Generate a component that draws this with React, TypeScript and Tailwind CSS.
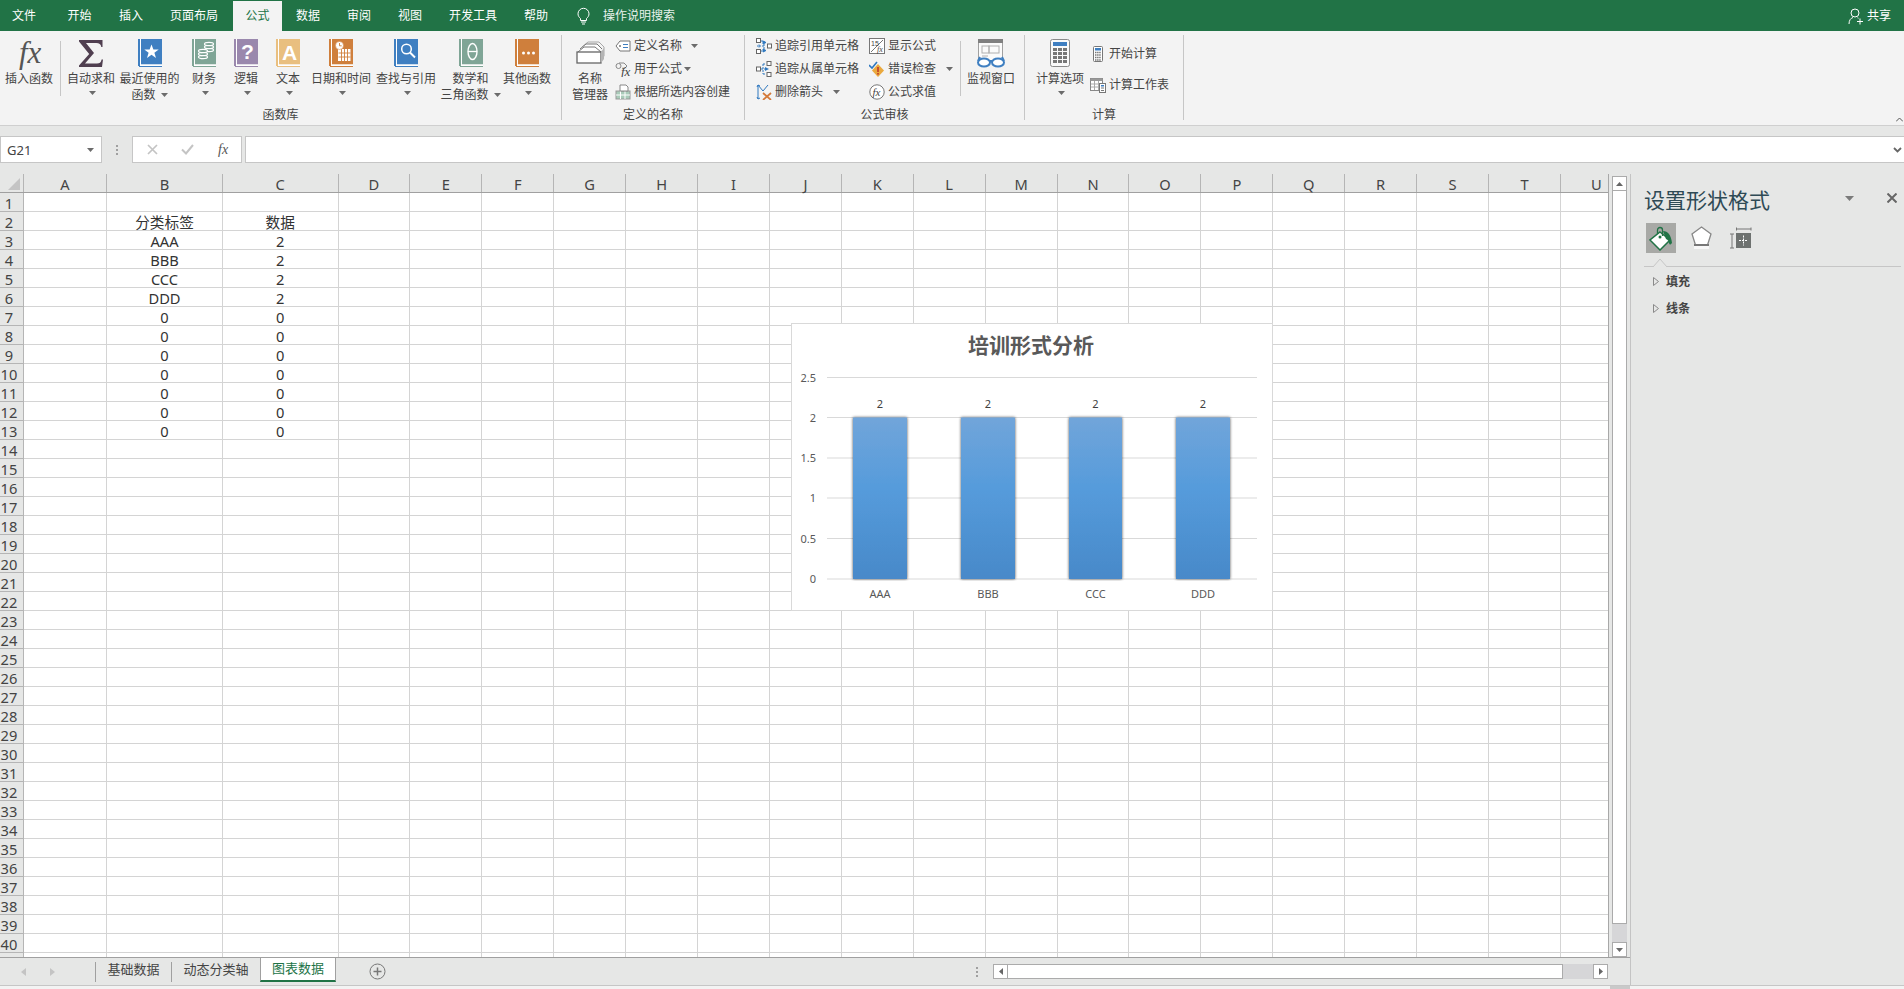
import React from "react";

const FONT = "font-['Noto_Sans','Noto_Sans_CJK_SC',sans-serif]";

const Caret = () => (
  <svg width="7" height="4" viewBox="0 0 7 4" className="shrink-0">
    <path d="M0 0h7L3.5 4z" fill="#6b6b6b" />
  </svg>
);

const Book = ({ color, children }: { color: string; children?: React.ReactNode }) => (
  <svg width="24" height="28" viewBox="0 0 24 28">
    <rect x="0" y="0" width="2" height="27" fill={color} />
    <rect x="3" y="0" width="21" height="25.5" fill={color} />
    <rect x="1" y="27" width="23" height="1" fill={color} />
    <rect x="2" y="0" width="1" height="27" fill="#ffffff" />
    <rect x="2" y="25.5" width="22" height="1.5" fill="#ffffff" />
    {children}
  </svg>
);

const FxIcon = () => (
  <svg width="36" height="34" viewBox="0 0 36 34">
    <text x="8" y="27" fontSize="31" fontStyle="italic" fill="#555555" className="font-['Liberation_Serif',serif]">fx</text>
  </svg>
);

const SigmaIcon = () => (
  <svg width="24" height="27" viewBox="0 0 24 27">
    <path d="M0 0h23.5v7h-1.2c-.5-3-2-4-5-4H7l8 10L6 23.4h12c2.500 0 4-1 4.600-4h1.400L23 27H0v-1.500L10.200 14 0 1.500z" fill="#503f50" />
  </svg>
);

const StarBook = () => (
  <Book color="#3f7fc1">
    <path d="M13.500 5.500l1.900 5h5.300l-4.300 3.200 1.600 5.300-4.500-3.200-4.500 3.200 1.600-5.300-4.300-3.200h5.300z" fill="#fff" />
  </Book>
);

const CoinBook = () => (
  <Book color="#7fa596">
    <g fill="#7fa596" stroke="#fff" strokeWidth="1.200">
      <ellipse cx="17" cy="11" rx="4.500" ry="1.600" />
      <ellipse cx="17" cy="8" rx="4.500" ry="1.600" />
      <ellipse cx="17" cy="5" rx="4.500" ry="1.600" />
      <ellipse cx="11" cy="18" rx="4.500" ry="1.600" />
      <ellipse cx="11" cy="15" rx="4.500" ry="1.600" />
      <ellipse cx="11" cy="12" rx="4.500" ry="1.600" />
    </g>
  </Book>
);

const QBook = () => (
  <Book color="#9a88ad">
    <text x="13.500" y="20" textAnchor="middle" fontSize="21" fontWeight="700" fill="#fff" className="font-['Liberation_Sans',sans-serif]">?</text>
  </Book>
);

const TextBook = () => (
  <Book color="#e9bf7f">
    <text x="13.500" y="21" textAnchor="middle" fontSize="21" fontWeight="700" fill="#fff" className="font-['Liberation_Sans',sans-serif]">A</text>
  </Book>
);

const DateBook = () => (
  <Book color="#cf7f3c">
    <path d="M9 10h12.500v12H9z" fill="#fff" />
    <path d="M9.500 14h12M9.500 18h12M12.500 10v12M15.500 10v12M18.500 10v12" stroke="#cf7f3c" strokeWidth="0.900" />
    <circle cx="10.500" cy="6.500" r="4" fill="#fff" stroke="#cf7f3c" strokeWidth="0.500" />
    <path d="M10.500 4v2.800h2.200" stroke="#cf7f3c" strokeWidth="0.900" fill="none" />
  </Book>
);

const SearchBook = () => (
  <Book color="#3f7fc1">
    <circle cx="12.500" cy="10" r="4.800" fill="none" stroke="#fff" strokeWidth="1.500" />
    <path d="M16 13.500l5 5" stroke="#fff" strokeWidth="1.900" />
  </Book>
);

const ThetaBook = () => (
  <Book color="#7fa596">
    <ellipse cx="13.500" cy="12.500" rx="4.500" ry="8" fill="none" stroke="#fff" strokeWidth="1.400" />
    <path d="M9 12.500h9" stroke="#fff" strokeWidth="1.300" />
  </Book>
);

const DotsBook = () => (
  <Book color="#cf7f3c">
    <circle cx="8.500" cy="14" r="1.500" fill="#fff" />
    <circle cx="13.500" cy="14" r="1.500" fill="#fff" />
    <circle cx="18.500" cy="14" r="1.500" fill="#fff" />
  </Book>
);

const NameMgrIcon = () => (
  <svg width="29" height="24" viewBox="0 0 29 24">
    <path d="M6 6l6-5h11l5 5v9l-3 4" fill="none" stroke="#a8a8a8" strokeWidth="1" />
    <path d="M4 8l6-5h11l5 5" fill="#fff" stroke="#777" strokeWidth="1" />
    <path d="M2 11l6-5h11l6 5" fill="#fff" stroke="#777" strokeWidth="1" />
    <rect x="1" y="11" width="24" height="11" fill="#fff" stroke="#666" strokeWidth="1.300" />
    <path d="M25 11l3-4v11l-3 4z" fill="#b5b5b5" />
  </svg>
);

const WatchIcon = () => (
  <svg width="30" height="29" viewBox="0 0 30 29">
    <rect x="2.500" y="0.500" width="24" height="22" fill="#fbfbfb" stroke="#a0a0a0" />
    <rect x="2" y="0" width="25" height="4" fill="#808080" />
    <rect x="6" y="7" width="7" height="7" fill="none" stroke="#b0b0b0" />
    <rect x="13" y="7" width="10" height="7" fill="none" stroke="#b0b0b0" />
    <path d="M6 17h6" stroke="#b0b0b0" />
    <g fill="#fff" stroke="#3f7fc1" strokeWidth="2">
      <ellipse cx="8" cy="23.500" rx="6" ry="4" />
      <ellipse cx="22" cy="23.500" rx="6" ry="4" />
    </g>
    <path d="M13 22h4M2 22l2-4M28 22l-2-4" fill="none" stroke="#3f7fc1" strokeWidth="2" />
  </svg>
);

const CalcBig = () => (
  <svg width="20" height="28" viewBox="0 0 20 28">
    <rect x="0.500" y="0.500" width="19" height="27" rx="2" fill="#fafafa" stroke="#8a8a8a" />
    <rect x="3" y="3" width="14" height="4" fill="#3f7fc1" />
    {[9, 13, 17, 21].map((y) =>
      [3, 8, 13].map((x) => <rect key={`${x}-${y}`} x={x} y={y} width="4" height="3" fill="#777" />)
    )}
  </svg>
);

const I16 = ({ children }: { children: React.ReactNode }) => (
  <svg width="16" height="16" viewBox="0 0 16 16" className="shrink-0">
    {children}
  </svg>
);

const DefineIcon = () => (
  <I16>
    <path d="M5 3h10v10H5L1 8z" fill="#fff" stroke="#777" />
    <circle cx="5" cy="8" r="1" fill="#777" />
    <path d="M8 6.500h5M8 9.500h5" stroke="#3f7fc1" />
  </I16>
);
const UseIcon = () => (
  <I16>
    <path d="M4 2h5l3 3-3 3-2-1" fill="none" stroke="#888" />
    <circle cx="3.500" cy="5" r="2.500" fill="none" stroke="#888" />
    <text x="6" y="15" fontSize="13" fontStyle="italic" fill="#444" className="font-['Liberation_Serif',serif]">fx</text>
  </I16>
);
const CreateIcon = () => (
  <I16>
    <rect x="1" y="7" width="14" height="8" fill="#a9cbb9" stroke="#999" />
    <path d="M5.500 7v8M10 7v8M1 11h14" stroke="#fff" />
    <path d="M5 1h6l2 2v4H5z" fill="#fff" stroke="#888" />
  </I16>
);
const TraceP = () => (
  <I16>
    <rect x="0.500" y="0.500" width="4" height="4" fill="#fff" stroke="#666" />
    <rect x="0.500" y="11.500" width="4" height="4" fill="#fff" stroke="#666" />
    <rect x="11.500" y="6" width="4" height="4" fill="#fff" stroke="#666" />
    <path d="M5 3h3v10H5M8 8H1" stroke="#2f78bf" fill="none" strokeDasharray="2 1" />
    <path d="M3 6.500v3M7 3l3 1.500L7 6zM7 11l3 1.500L7 14z" fill="#2f78bf" stroke="#2f78bf" />
  </I16>
);
const TraceD = () => (
  <I16>
    <rect x="0.500" y="6" width="4" height="4" fill="#fff" stroke="#666" />
    <rect x="11" y="0.500" width="4" height="4" fill="#fff" stroke="#666" />
    <rect x="11" y="11.500" width="4" height="4" fill="#fff" stroke="#666" />
    <path d="M5 8h4M7 3h3M7 13h3M7 3v10" stroke="#2f78bf" strokeDasharray="2 1" fill="none" />
    <path d="M9 6l4 2-4 2z" fill="#2f78bf" />
  </I16>
);
const RemoveArrows = () => (
  <I16>
    <path d="M2 1l5 6M2 15V1M12 1L7 7" stroke="#2f78bf" fill="none" />
    <path d="M1 3l1-2 2 1M1 13l1 2 2-1" stroke="#2f78bf" fill="none" />
    <path d="M7 9l8 7M15 9l-8 7" stroke="#d47a3a" strokeWidth="1.700" />
  </I16>
);
const ShowF = () => (
  <I16>
    <rect x="0.500" y="0.500" width="15" height="15" fill="#fff" stroke="#777" />
    <path d="M2 14L14 2" stroke="#777" />
    <text x="2" y="8" fontSize="7" fill="#444" className="font-['Liberation_Sans',sans-serif]">15</text>
    <text x="8" y="14" fontSize="8" fontStyle="italic" fill="#444" className="font-['Liberation_Serif',serif]">fx</text>
  </I16>
);
const ErrorIcon = () => (
  <I16>
    <path d="M0 4l3 3 5-6" stroke="#2f78bf" strokeWidth="1.600" fill="none" />
    <path d="M9 3l6 6.500-6 6.500-6-6.500z" fill="#eaa93e" />
    <rect x="8.200" y="6" width="1.600" height="5" fill="#c0392b" />
    <rect x="8.200" y="12" width="1.600" height="1.600" fill="#c0392b" />
  </I16>
);
const EvalIcon = () => (
  <I16>
    <circle cx="8" cy="8" r="7.200" fill="#fff" stroke="#777" />
    <text x="3.500" y="12" fontSize="11" fontStyle="italic" fill="#444" className="font-['Liberation_Serif',serif]">fx</text>
  </I16>
);
const CalcSmall = () => (
  <I16>
    <rect x="3.500" y="0.500" width="9" height="15" rx="1" fill="#fff" stroke="#777" />
    <rect x="5" y="2" width="6" height="2.500" fill="#3f7fc1" />
    <path d="M5 6.500h6M5 9h6M5 11.500h6M5 14h6" stroke="#777" strokeWidth="1.300" strokeDasharray="1.500 .6" />
  </I16>
);
const CalcSheet = () => (
  <I16>
    <rect x="0.500" y="1.500" width="12" height="12" fill="#fff" stroke="#888" />
    <rect x="0.500" y="1.500" width="12" height="2.500" fill="#999" />
    <path d="M4.500 4v9M8.500 4v9M1 7h11M1 10h11" stroke="#aaa" />
    <rect x="9.500" y="6.500" width="6" height="9" fill="#fff" stroke="#777" />
    <rect x="11" y="8" width="3" height="1.500" fill="#3f7fc1" />
    <path d="M11 11h3M11 13.500h3" stroke="#777" />
  </I16>
);

const BigBtn = ({ w, lines, icon, caret = true, inlineCaret = false, pl = 0 }: { w: number; lines: string[]; icon: React.ReactNode; caret?: boolean; inlineCaret?: boolean; pl?: number }) => (
  <div className="flex shrink-0 flex-col items-center" style={{ width: w, paddingLeft: pl }}>
    <div className="mt-[4px] flex h-[28px] items-center justify-center">{icon}</div>
    <div className="mt-[4px] flex flex-col items-center whitespace-nowrap leading-[16px]">
      {lines.map((l, i) => (
        <div key={l} className="flex items-center gap-[5px]">
          {l}
          {inlineCaret && i === lines.length - 1 && <Caret />}
        </div>
      ))}
      {!inlineCaret && caret && (
        <div className="flex h-[12px] items-center pl-[3px]">
          <Caret />
        </div>
      )}
    </div>
  </div>
);

const SmallRow = ({ icon, label, caretGap, h = 23 }: { icon: React.ReactNode; label: string; caretGap?: number; h?: number }) => (
  <div className="flex items-start gap-[3px] whitespace-nowrap leading-[20px]" style={{ height: h }}>
    <div className="flex h-[20px] w-[16px] shrink-0 items-center justify-center">{icon}</div>
    <span>{label}</span>
    {caretGap !== undefined && (
      <div className="flex h-[20px] items-center" style={{ marginLeft: caretGap }}>
        <Caret />
      </div>
    )}
  </div>
);

const Group = ({ w, label, children }: { w: number; label: string; children: React.ReactNode }) => (
  <div className="mt-[4px] flex h-[85px] shrink-0 flex-col border-r border-[#c6c6c6]" style={{ width: w }}>
    <div className="flex min-h-0 flex-1">{children}</div>
    <div className="h-[12px] text-center leading-[14px]">{label}</div>
  </div>
);

const ShortSep = () => <div className="mt-[6px] h-[55px] w-px shrink-0 bg-[#c6c6c6]" />;

const tabs: [string, number, number][] = [
  ["文件", 48, 0],
  ["开始", 63, 0],
  ["插入", 40, 0],
  ["页面布局", 82, 4],
  ["公式", 49, 0],
  ["数据", 52, 0],
  ["审阅", 50, 0],
  ["视图", 52, 0],
  ["开发工具", 74, 0],
  ["帮助", 52, 0],
];

const TitleBar = () => (
  <div className="flex h-[31px] items-end bg-[#217346] text-[12px] text-white">
    {tabs.map(([t, w, pl]) =>
      t === "公式" ? (
        <div key={t} className="flex h-[30px] items-center justify-center bg-[#f3f3f3] text-[#217346]" style={{ width: w }}>
          {t}
        </div>
      ) : (
        <div key={t} className="flex h-[30px] items-center justify-center" style={{ width: w, paddingLeft: pl }}>
          {t}
        </div>
      )
    )}
    <div className="ml-[14px] flex h-[30px] items-center gap-[12px]">
      <svg width="15" height="18" viewBox="0 0 15 18" fill="none" stroke="#fff">
        <path d="M4.500 11.500C3 10.300 2 8.800 2 6.800a5.500 5.500 0 0 1 11 0c0 2-1 3.500-2.500 4.700v2h-6z" />
        <path d="M5 15h5M6 17h3" />
      </svg>
      <span className="text-[#e8f2ec]">操作说明搜索</span>
    </div>
    <div className="ml-auto mr-[13px] flex h-[30px] items-center gap-[3px]">
      <svg width="16" height="17" viewBox="0 0 16 17" fill="none" stroke="#fff">
        <circle cx="7" cy="5" r="4" />
        <path d="M1 16c0-4 2-6 4-6.500M9.500 9.800l1 .4M9 13.500h6M12 10.500v6" />
      </svg>
      <span>共享</span>
    </div>
  </div>
);

const Ribbon = () => (
  <div className="flex h-[95px] border-b border-[#cfcfcf] bg-[#f3f3f3] text-[12px] text-[#444]">
    <Group w={562} label="函数库">
      <BigBtn w={58} lines={["插入函数"]} caret={false} icon={<FxIcon />} />
      <div className="ml-[2px] mt-[6px] h-[55px] w-px shrink-0 bg-[#c6c6c6]" />
      <BigBtn w={60} lines={["自动求和"]} icon={<SigmaIcon />} />
      <BigBtn w={57} lines={["最近使用的", "函数"]} inlineCaret icon={<StarBook />} />
      <BigBtn w={52} lines={["财务"]} icon={<CoinBook />} />
      <BigBtn w={32} lines={["逻辑"]} icon={<QBook />} />
      <BigBtn w={52} lines={["文本"]} icon={<TextBook />} />
      <BigBtn w={54} lines={["日期和时间"]} icon={<DateBook />} />
      <BigBtn w={76} lines={["查找与引用"]} icon={<SearchBook />} />
      <BigBtn w={45} pl={8} lines={["数学和", "三角函数"]} inlineCaret icon={<ThetaBook />} />
      <BigBtn w={72} pl={4} lines={["其他函数"]} icon={<DotsBook />} />
    </Group>
    <Group w={183} label="定义的名称">
      <BigBtn w={53} pl={3} lines={["名称", "管理器"]} caret={false} icon={<NameMgrIcon />} />
      <div className="pt-[1px]">
        <SmallRow icon={<DefineIcon />} label="定义名称" caretGap={6} />
        <SmallRow icon={<UseIcon />} label="用于公式" caretGap={-1} />
        <SmallRow icon={<CreateIcon />} label="根据所选内容创建" />
      </div>
    </Group>
    <Group w={280} label="公式审核">
      <div className="w-[124px] shrink-0 pl-[11px] pt-[1px]">
        <SmallRow icon={<TraceP />} label="追踪引用单元格" />
        <SmallRow icon={<TraceD />} label="追踪从属单元格" />
        <SmallRow icon={<RemoveArrows />} label="删除箭头" caretGap={7} />
      </div>
      <div className="w-[91px] shrink-0 pt-[1px]">
        <SmallRow icon={<ShowF />} label="显示公式" />
        <SmallRow icon={<ErrorIcon />} label="错误检查" caretGap={7} />
        <SmallRow icon={<EvalIcon />} label="公式求值" />
      </div>
      <ShortSep />
      <BigBtn w={60} lines={["监视窗口"]} caret={false} icon={<WatchIcon />} />
    </Group>
    <Group w={159} label="计算">
      <BigBtn w={65} pl={5} lines={["计算选项"]} icon={<CalcBig />} />
      <div className="pt-[9px]">
        <SmallRow h={31} icon={<CalcSmall />} label="开始计算" />
        <SmallRow h={31} icon={<CalcSheet />} label="计算工作表" />
      </div>
    </Group>
    <div className="flex flex-1 items-end justify-end pb-[3px] pr-[1px]">
      <svg width="7" height="5" viewBox="0 0 7 5" fill="none" stroke="#555">
        <path d="M0 4.500L3.500 1 7 4.500" />
      </svg>
    </div>
  </div>
);

const FormulaBar = () => (
  <div className="flex h-[48px] items-start bg-[#e6e7e6] pt-[10px]">
    <div className="flex h-[27px] w-[102px] shrink-0 items-center justify-between border border-[#c6c6c6] bg-white pl-[6px] pr-[7px] text-[13px] text-[#444]">
      <span className="pt-[2px]">G21</span>
      <Caret />
    </div>
    <div className="flex h-[27px] w-[30px] shrink-0 flex-col items-center justify-center gap-[2px]">
      <i className="h-[2px] w-[2px] bg-[#a0a0a0]" />
      <i className="h-[2px] w-[2px] bg-[#a0a0a0]" />
      <i className="h-[2px] w-[2px] bg-[#a0a0a0]" />
    </div>
    <div className="flex h-[27px] w-[110px] shrink-0 items-center border border-[#c6c6c6] bg-white">
      <div className="flex w-[37px] justify-center pl-[2px]">
        <svg width="11" height="11" viewBox="0 0 11 11" stroke="#c4c4c4" strokeWidth="1.700">
          <path d="M1 1l9 9M10 1l-9 9" />
        </svg>
      </div>
      <div className="flex w-[36px] justify-center">
        <svg width="13" height="11" viewBox="0 0 13 11" stroke="#c4c4c4" strokeWidth="2" fill="none">
          <path d="M1 5.500l4 4L12 1" />
        </svg>
      </div>
      <div className="w-[36px] text-center font-['Liberation_Serif',serif] text-[14px] italic text-[#555]">fx</div>
    </div>
    <div className="ml-[3px] flex h-[27px] flex-1 items-center justify-end border-y border-l border-[#c6c6c6] bg-white pr-[2px]">
      <svg width="9" height="6" viewBox="0 0 9 6" fill="none" stroke="#666" strokeWidth="1.800">
        <path d="M1 1l3.500 3.500L8 1" />
      </svg>
    </div>
  </div>
);

const colWidths = [83, 116, 115.5, ...Array.from({ length: 18 }, () => 71.92)];
const colNames = "ABCDEFGHIJKLMNOPQRSTU".split("");

const cellData: Record<number, [string, string]> = {
  2: ["分类标签", "数据"],
  3: ["AAA", "2"],
  4: ["BBB", "2"],
  5: ["CCC", "2"],
  6: ["DDD", "2"],
  7: ["0", "0"],
  8: ["0", "0"],
  9: ["0", "0"],
  10: ["0", "0"],
  11: ["0", "0"],
  12: ["0", "0"],
  13: ["0", "0"],
};

const rows = Array.from({ length: 41 }, (_, i) => i + 1);

const Grid = () => (
  <div className="relative w-[1609px] shrink-0 overflow-hidden border-r border-[#a8a8a8] text-[14.67px] text-[#444]">
    <div className="flex h-[19px] border-b border-[#a0a0a0]">
      <div className="flex w-[24px] shrink-0 items-end justify-end border-r border-[#b5b5b5] pb-[2px] pr-[3px]">
        <svg width="12" height="12" viewBox="0 0 12 12">
          <path d="M12 0v12H0z" fill="#c4c4c4" />
        </svg>
      </div>
      {colNames.map((c, i) => (
        <div key={c} className="flex shrink-0 items-center justify-center border-r border-[#b5b5b5] pt-[1px] leading-[18px]" style={{ width: colWidths[i] }}>
          {c}
        </div>
      ))}
    </div>
    {rows.map((r) => (
      <div key={r} className="flex h-[19px] bg-white">
        <div className="flex w-[24px] shrink-0 items-center justify-center border-b border-r border-[#b5b5b5] bg-[#e6e7e6] pr-[5px] pt-[2px] leading-[16px] text-[#444]">
          {r === 41 ? "" : r}
        </div>
        {colNames.map((c, i) => {
          const v = i === 1 ? cellData[r]?.[0] : i === 2 ? cellData[r]?.[1] : undefined;
          return (
            <div key={c} className="flex shrink-0 items-center justify-center border-b border-r border-[#d4d4d4] pt-[2px] leading-[16px] text-[#333]" style={{ width: colWidths[i] }}>
              {v}
            </div>
          );
        })}
      </div>
    ))}
    <Chart />
  </div>
);

const chartTicks: [string, number][] = [
  ["2.5", 54.5],
  ["2", 94.5],
  ["1.5", 135],
  ["1", 175],
  ["0.5", 215.5],
  ["0", 256],
];
const chartBars: [string, number, number][] = [
  ["AAA", 62, 54],
  ["BBB", 170, 54],
  ["CCC", 278, 53],
  ["DDD", 385, 54],
];

const Chart = () => (
  <div className={`absolute left-[791px] top-[149px] h-[288px] w-[482px] border border-[#d9d9d9] bg-white ${FONT}`}>
    <svg width="480" height="286" viewBox="1 1 480 286">
      <defs>
        <linearGradient id="barFill" x1="0" y1="0" x2="0" y2="1">
          <stop offset="0" stopColor="#71a5da" />
          <stop offset="0.45" stopColor="#559bdb" />
          <stop offset="1" stopColor="#4889c9" />
        </linearGradient>
        <filter id="barShadow" x="-15%" y="-3%" width="130%" height="104%">
          <feGaussianBlur in="SourceAlpha" stdDeviation="1.800" />
          <feComponentTransfer>
            <feFuncA type="linear" slope="0.700" />
          </feComponentTransfer>
          <feMerge>
            <feMergeNode />
            <feMergeNode in="SourceGraphic" />
          </feMerge>
        </filter>
      </defs>
      <text x="240" y="30" textAnchor="middle" fontSize="21" fontWeight="700" fill="#595959">培训形式分析</text>
      {chartTicks.map(([t, y]) => (
        <g key={t}>
          <line x1="36" x2="466" y1={y} y2={y} stroke="#d9d9d9" />
          <text x="25" y={y + 4} textAnchor="end" fontSize="11" fill="#595959">{t}</text>
        </g>
      ))}
      {chartBars.map(([c, x, w]) => (
        <g key={c}>
          <rect x={x} y="94.500" width={w} height="161.500" fill="url(#barFill)" filter="url(#barShadow)" />
          <text x={x + w / 2} y="85" textAnchor="middle" fontSize="11" fill="#404040">2</text>
          <text x={x + w / 2} y="275" textAnchor="middle" fontSize="11" fill="#595959">{c}</text>
        </g>
      ))}
    </svg>
  </div>
);

const VScroll = () => (
  <div className="flex w-[21px] shrink-0 flex-col pl-[3px] pr-[3px] pt-[2px]">
    <div className="flex h-[15px] items-center justify-center border border-[#ababab] bg-white">
      <svg width="7" height="4" viewBox="0 0 7 4"><path d="M3.500 0L7 4H0z" fill="#666" /></svg>
    </div>
    <div className="h-[733px] border-x border-b border-[#ababab] bg-white" />
    <div className="flex-1 bg-[#d6d6d8]" />
    <div className="flex h-[15px] items-center justify-center border border-[#ababab] bg-white">
      <Caret />
    </div>
  </div>
);

const TabBar = () => (
  <div className="flex h-[28px] items-center border-t border-[#a0a0a0] text-[13px] text-[#444]">
    <div className="flex w-[95px] shrink-0 items-center pl-[21px]">
      <svg width="5" height="8" viewBox="0 0 5 8"><path d="M5 0v8L0 4z" fill="#c4c4c4" /></svg>
      <svg className="ml-[24px]" width="5" height="8" viewBox="0 0 5 8"><path d="M0 0v8l5-4z" fill="#c4c4c4" /></svg>
    </div>
    <div className="h-[20px] w-px bg-[#a0a0a0]" />
    <div className="flex w-[75px] justify-center pb-[3px]">基础数据</div>
    <div className="h-[20px] w-px bg-[#a0a0a0]" />
    <div className="flex w-[88px] justify-center pb-[3px]">动态分类轴</div>
    <div className="-mt-[3px] flex h-[24px] w-[76px] items-center justify-center border-b-2 border-x border-b-[#217346] border-x-[#a0a0a0] bg-white text-[#217346]">图表数据</div>
    <div className="ml-[33px] flex items-center">
      <svg width="17" height="17" viewBox="0 0 17 17" fill="none" stroke="#777">
        <circle cx="8.500" cy="8.500" r="7.500" />
        <path d="M8.500 4.500v8M4.500 8.500h8" strokeWidth="1.500" />
      </svg>
    </div>
    <div className="ml-[590px] flex w-[3px] flex-col gap-[2px]">
      <i className="h-[2px] w-[2px] bg-[#a0a0a0]" />
      <i className="h-[2px] w-[2px] bg-[#a0a0a0]" />
      <i className="h-[2px] w-[2px] bg-[#a0a0a0]" />
    </div>
    <div className="ml-[14px] flex h-[15px] w-[615px] shrink-0">
      <div className="flex w-[15px] items-center justify-center border border-[#ababab] bg-white">
        <svg width="4" height="7" viewBox="0 0 4 7"><path d="M4 0v7L0 3.500z" fill="#666" /></svg>
      </div>
      <div className="w-[555px] border-y border-r border-[#ababab] bg-white" />
      <div className="flex-1 bg-[#d6d6d8]" />
      <div className="flex w-[15px] items-center justify-center border border-[#ababab] bg-white">
        <svg width="4" height="7" viewBox="0 0 4 7"><path d="M0 0v7l4-3.500z" fill="#666" /></svg>
      </div>
    </div>
  </div>
);

const Panel = () => (
  <div className="flex w-[274px] shrink-0 flex-col border-l border-[#c4c4c4] pl-[13px] pr-[3px] text-[#444]">
    <div className="flex h-[48px] items-center pt-[4px]">
      <span className="text-[21px] leading-[28px] text-[#2f4a55]">设置形状格式</span>
      <svg className="mb-[4px] ml-[75px]" width="9" height="5" viewBox="0 0 9 5"><path d="M0 0h9L4.500 5z" fill="#7b7b7b" /></svg>
      <svg className="mb-[4px] ml-[33px]" width="10" height="10" viewBox="0 0 10 10" stroke="#666" strokeWidth="2"><path d="M0.500 0.500l9 9M9.500 0.500l-9 9" /></svg>
    </div>
    <div className="mt-[1px] flex h-[30px] items-center">
      <div className="ml-[2px] flex h-[30px] w-[30px] items-center justify-center bg-[#a8a9a6]">
        <svg width="24" height="25" viewBox="0 0 24 25">
          <path d="M11 6L21 14 11 24 1 14z" fill="#fff" stroke="#217346" strokeWidth="1.500" />
          <path d="M8.500 8V4a2.500 2.500 0 0 1 5 0v6" fill="none" stroke="#217346" strokeWidth="1.300" />
          <circle cx="11" cy="11" r="1.500" fill="#217346" />
          <path d="M14 5c5 0 8 4 9 12-1 1-2 3-3 0 0-2-1-3-3-4z" fill="#217346" />
        </svg>
      </div>
      <div className="ml-[14px] flex w-[22px] justify-center">
        <svg width="21" height="24" viewBox="0 0 21 24">
          <path d="M10.500 1L20 8l-3.500 11h-12L1 8z" fill="#fff" stroke="#888" strokeWidth="1.300" />
          <rect x="3" y="18" width="15" height="2" fill="#777" />
          <rect x="3" y="20" width="15" height="3" fill="#f7f7f7" />
        </svg>
      </div>
      <div className="ml-[18px]">
        <svg width="22" height="22" viewBox="0 0 22 22" fill="none" stroke="#777">
          <path d="M6.500 0.500v3M21 0.500v3M6.500 2h14.500M0 7h4M0 21h4M2 7v14" />
          <rect x="6" y="6" width="15" height="15" fill="#6e7270" stroke="none" />
          <path d="M13.500 8.500v10M9 13.500h9" stroke="#fff" strokeDasharray="2 1" />
        </svg>
      </div>
    </div>
    <div className="relative mt-[13px] h-px w-[257px] bg-[#c6c6c6]">
      <svg className="absolute bottom-0 left-[9px]" width="14" height="9" viewBox="0 0 14 9" fill="#e6e7e6" stroke="#c6c6c6">
        <path d="M0 9L7 1l7 8" />
      </svg>
    </div>
    <div className="mt-[1px] text-[12px] font-bold">
      {["填充", "线条"].map((t) => (
        <div key={t} className="flex h-[27px] items-center">
          <svg className="ml-[9px]" width="6" height="9" viewBox="0 0 6 9" fill="none" stroke="#8a8a8a">
            <path d="M0.500 0.500L5.500 4.500 0.500 8.500z" />
          </svg>
          <span className="ml-[7px]">{t}</span>
        </div>
      ))}
    </div>
  </div>
);

export default function App() {
  return (
    <div className={`relative flex h-[989px] w-[1904px] flex-col overflow-hidden bg-[#e6e7e6] ${FONT}`}>
      <TitleBar />
      <Ribbon />
      <FormulaBar />
      <div className="flex min-h-0 flex-1">
        <div className="flex w-[1630px] shrink-0 flex-col">
          <div className="flex h-[783px] min-h-0">
            <Grid />
            <VScroll />
          </div>
          <TabBar />
        </div>
        <Panel />
      </div>
      <div className="flex h-[4px] shrink-0 border-t border-[#c6c6c6] bg-[#f3f3f3]">
        <div className="ml-[1610px] h-full w-[20px] bg-[#c9c9c9]" />
      </div>
    </div>
  );
}
